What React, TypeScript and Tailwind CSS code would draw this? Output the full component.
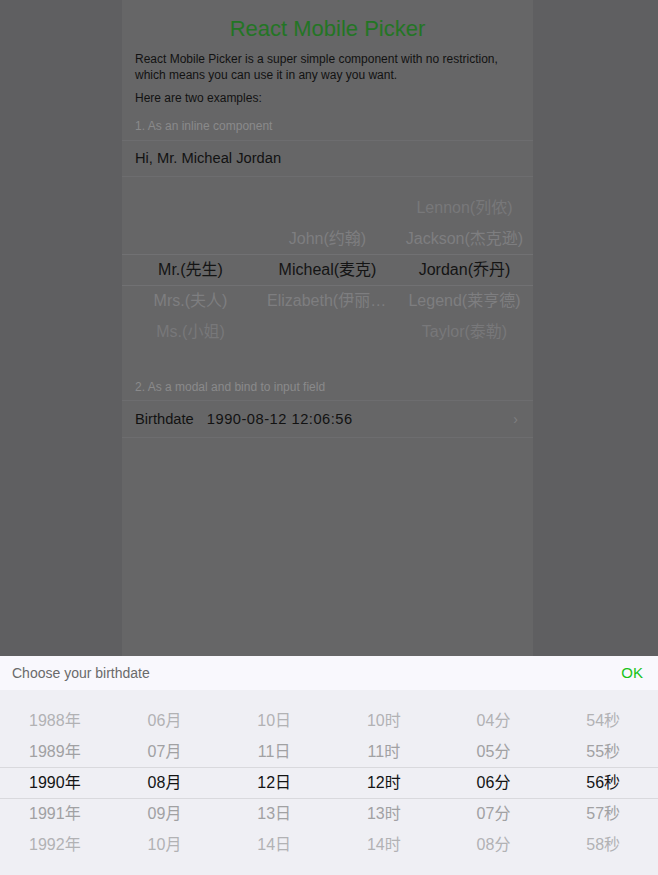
import React from 'react';

const FONT = { fontFamily: '"Liberation Sans", "Noto Sans CJK SC", Arial, sans-serif' };

const inlineColumns: string[][] = [
  ['', '', 'Mr.(先生)', 'Mrs.(夫人)', 'Ms.(小姐)'],
  ['', 'John(约翰)', 'Micheal(麦克)', 'Elizabeth(伊丽莎白)', ''],
  ['Lennon(列侬)', 'Jackson(杰克逊)', 'Jordan(乔丹)', 'Legend(莱亨德)', 'Taylor(泰勒)'],
];

const dateColumns: string[][] = [
  ['1988年', '1989年', '1990年', '1991年', '1992年'],
  ['06月', '07月', '08月', '09月', '10月'],
  ['10日', '11日', '12日', '13日', '14日'],
  ['10时', '11时', '12时', '13时', '14时'],
  ['04分', '05分', '06分', '07分', '08分'],
  ['54秒', '55秒', '56秒', '57秒', '58秒'],
];

// row position -> tone
const tones = ['far', 'near', 'sel', 'near', 'far'] as const;

type Colors = { far: string; near: string; sel: string };

const PickerColumn = ({ items, colors }: { items: string[]; colors: Colors }) => (
  <div className="flex-1 min-w-0 flex flex-col justify-center px-2">
    {items.map((text, i) => (
      <div
        key={i}
        className={`h-[31px] leading-[31px] text-[16px] text-center truncate ${colors[tones[i]]}`}
      >
        {text}
      </div>
    ))}
  </div>
);

const Picker = ({
  columns,
  colors,
  lineColor,
  bg,
}: {
  columns: string[][];
  colors: Colors;
  lineColor: string;
  bg: string;
}) => (
  <div className={`relative h-[185px] flex overflow-hidden ${bg}`}>
    {columns.map((items, i) => (
      <PickerColumn key={i} items={items} colors={colors} />
    ))}
    {/* selection highlight lines */}
    <div className={`absolute left-0 right-0 top-[77px] h-[32px] border-t border-b pointer-events-none ${lineColor}`} />
  </div>
);

const App = () => {
  return (
    <div className="relative w-full h-[875px] overflow-hidden bg-[#5f5f61]" style={FONT}>
      <div className="ml-[122px] w-[411px] h-full bg-[#666667]">
        <h1 className="pt-[16px] h-[42px] leading-[26px] text-[22px] text-center text-[#237524]">
          React Mobile Picker
        </h1>

        <div className="px-[13px] text-[12px] leading-[16px] text-[#121212]">
          <p className="mt-[9px]">
            React Mobile Picker is a super simple component with no restriction,
            <br />
            which means you can use it in any way you want.
          </p>
          <p className="mt-[7px]">Here are two examples:</p>
          <p className="mt-[12px] text-[#8a8a8b]">1. As an inline component</p>
        </div>

        <div className="mt-[6px] border-t border-b border-[#6d6d6f] h-[37px] flex items-center px-[13px] text-[14.7px] text-[#121212]">
          Hi, Mr. Micheal Jordan
        </div>

        <Picker
          columns={inlineColumns}
          colors={{ far: 'text-[#78787a]', near: 'text-[#7e7e80]', sel: 'text-[#141414]' }}
          lineColor="border-[#717173]"
          bg="bg-[#666667]"
        />

        <p className="mt-[17px] px-[13px] text-[12px] leading-[16px] text-[#8a8a8b]">
          2. As a modal and bind to input field
        </p>

        <div className="mt-[5px] border-t border-b border-[#6d6d6f] h-[38px] flex items-center px-[13px] text-[14.7px] text-[#121212]">
          <span>Birthdate</span>
          <span className="ml-[13px] tracking-[0.5px]">1990-08-12 12:06:56</span>
          <span className="ml-auto mr-[2px] text-[14px] text-[#7e7e80]">›</span>
        </div>
      </div>

      {/* bottom sheet modal */}
      <div className="absolute left-0 right-0 bottom-0">
        <div className="h-[34px] bg-[#f9f8fd] flex items-center justify-between pl-[12px] pr-[15px]">
          <span className="text-[14px] text-[#6a6a6a]">Choose your birthdate</span>
          <span className="text-[15px] text-[#17c317]">OK</span>
        </div>
        <Picker
          columns={dateColumns}
          colors={{ far: 'text-[#b2b2b4]', near: 'text-[#a1a1a3]', sel: 'text-[#141414]' }}
          lineColor="border-[#d9d9dd]"
          bg="bg-[#efeff4]"
        />
      </div>
    </div>
  );
};

export default App;
